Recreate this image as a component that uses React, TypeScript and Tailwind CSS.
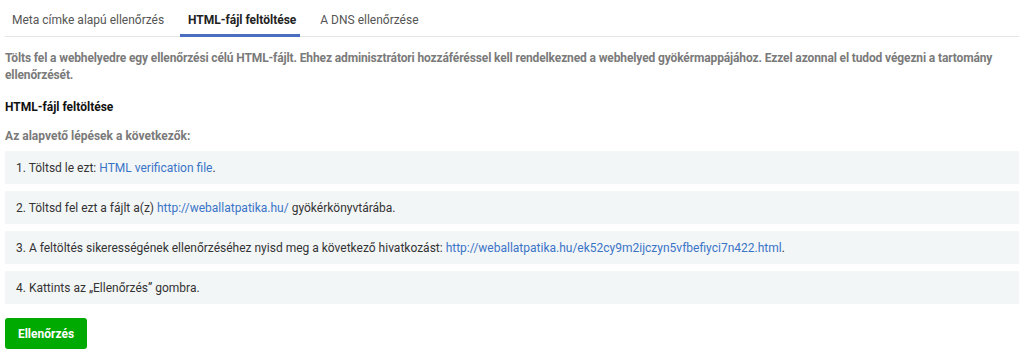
import React from 'react';

const steps: React.ReactNode[] = [
  <>
    1. Töltsd le ezt: <a className="text-[#3a74c7]">HTML verification file</a>.
  </>,
  <>
    2. Töltsd fel ezt a fájlt a(z) <a className="text-[#3a74c7]">http://weballatpatika.hu/</a> gyökérkönyvtárába.
  </>,
  <>
    3. A feltöltés sikerességének ellenőrzéséhez nyisd meg a következő hivatkozást:{' '}
    <a className="text-[#3a74c7]">http://weballatpatika.hu/ek52cy9m2ijczyn5vfbefiyci7n422.html</a>.
  </>,
  <>4. Kattints az „Ellenőrzés” gombra.</>,
];

export default function App() {
  return (
    <div className="w-[1024px] h-[363px] bg-white px-[5px] font-['Roboto',sans-serif] overflow-hidden">
      <div className="flex h-[37px] border-b border-[#e6e6e6] text-[12px]">
        <div className="w-[168px] pl-[7px] pt-[11px] text-[#555]">Meta címke alapú ellenőrzés</div>
        <div className="ml-[7px] pl-[8px] pr-[4px] pt-[11px] font-bold text-[#222] border-b-[3px] border-[#4a6ec0] mb-[-1px]">
          HTML-fájl feltöltése
        </div>
        <div className="ml-[12px] px-[8px] pt-[11px] text-[#555]">A DNS ellenőrzése</div>
      </div>

      <p className="mt-[13px] text-[12px] leading-[17px] font-bold tracking-[-0.13px] text-[#7a7a7a]">
        Tölts fel a webhelyedre egy ellenőrzési célú HTML-fájlt. Ehhez adminisztrátori hozzáféréssel kell rendelkezned a
        webhelyed gyökérmappájához. Ezzel azonnal el tudod végezni a tartomány ellenőrzését.
      </p>

      <h3 className="mt-[15px] text-[12px] leading-[17px] font-bold text-[#111]">HTML-fájl feltöltése</h3>

      <p className="mt-[12px] text-[12px] leading-[17px] font-bold text-[#7a7a7a]">Az alapvető lépések a következők:</p>

      <div className="mt-[6px] flex flex-col gap-[7px]">
        {steps.map((s, i) => (
          <div key={i} className="h-[33px] bg-[#f3f6f7] pl-[11px] flex items-center text-[12px] text-[#333]">
            <span>{s}</span>
          </div>
        ))}
      </div>

      <button className="mt-[14px] w-[82px] h-[31px] rounded-[3px] bg-[#00aa00] text-white text-[12px] font-bold">
        Ellenőrzés
      </button>
    </div>
  );
}
